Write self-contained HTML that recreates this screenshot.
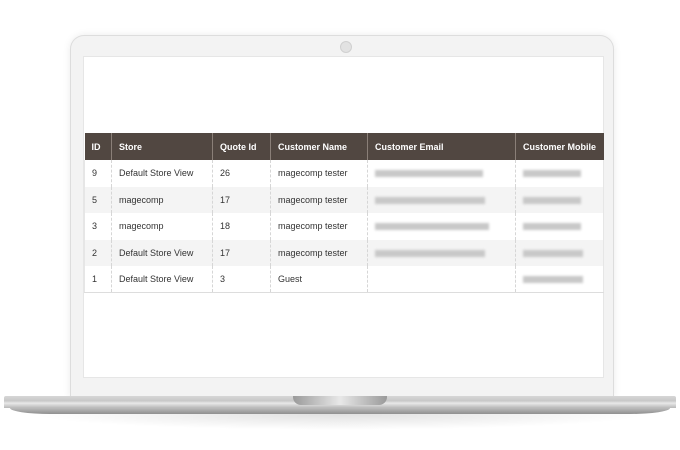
<!DOCTYPE html>
<html><head><style>
*{margin:0;padding:0;box-sizing:border-box}
body{width:680px;height:450px;background:#fff;position:relative;overflow:hidden;font-family:"Liberation Sans",sans-serif}
.lid{position:absolute;left:70px;top:35px;width:544px;height:364px;background:#f3f3f3;border-radius:14px 14px 0 0;border:1px solid #ddd;border-bottom:none;box-shadow:0 0 8px rgba(0,0,0,.08)}
.cam{position:absolute;left:340px;top:41px;width:12px;height:12px;border-radius:50%;background:#e2e2e2;border:1px solid #d0d0d0}
.screen{position:absolute;left:83px;top:56px;width:521px;height:322px;background:#fff;border:1px solid #e6e6e6}
.base{position:absolute;left:4px;top:396px;width:672px;height:12px;background:linear-gradient(#d6d6d6,#c8c8c8 40%,#e8e8e8 60%,#b8b8b8);border-radius:2px 2px 0 0}
.base2{position:absolute;left:10px;top:408px;width:660px;height:6px;background:linear-gradient(#bbb,#8f8f8f);border-radius:0 0 40px 40px/0 0 6px 6px}
.shadow{position:absolute;left:30px;top:414px;width:620px;height:16px;background:radial-gradient(ellipse at top,rgba(0,0,0,.12),rgba(0,0,0,0) 70%)}
.notch{position:absolute;left:293px;top:396px;width:94px;height:9px;background:linear-gradient(90deg,#9a9a9a,#e8e8e8 50%,#9a9a9a);border-radius:0 0 8px 8px}
table{position:absolute;left:84px;top:133px;width:520px;border-collapse:collapse;font-size:9px;color:#333}
th{background:#514741;color:#fff;font-weight:bold;text-align:left;height:27px;padding:0 7px;border-left:1px solid #8a7f78}
th:first-child{border-left:none}
td{height:26.5px;padding:0 7px;border-left:1px dashed #d6d6d6}
td:first-child{border-left:1px solid #e6e6e6}
td:last-child{border-right:1px solid #e6e6e6}
tr:nth-child(odd) td{background:#f4f4f4}
tr:last-child td{border-bottom:1px solid #ddd}
.bl{display:inline-block;height:7px;background:#c8c8c8;filter:blur(1.3px);vertical-align:middle}
</style></head><body>
<div class="lid"></div>
<div class="cam"></div>
<div class="screen"></div>
<table>
<tr><th style="width:27px">ID</th><th style="width:101px">Store</th><th style="width:58px">Quote Id</th><th style="width:97px">Customer Name</th><th style="width:148px">Customer Email</th><th>Customer Mobile</th></tr>
<tr><td>9</td><td>Default Store View</td><td>26</td><td>magecomp tester</td><td><span class="bl" style="width:108px"></span></td><td><span class="bl" style="width:58px"></span></td></tr>
<tr><td>5</td><td>magecomp</td><td>17</td><td>magecomp tester</td><td><span class="bl" style="width:110px"></span></td><td><span class="bl" style="width:58px"></span></td></tr>
<tr><td>3</td><td>magecomp</td><td>18</td><td>magecomp tester</td><td><span class="bl" style="width:114px"></span></td><td><span class="bl" style="width:58px"></span></td></tr>
<tr><td>2</td><td>Default Store View</td><td>17</td><td>magecomp tester</td><td><span class="bl" style="width:110px"></span></td><td><span class="bl" style="width:60px"></span></td></tr>
<tr><td>1</td><td>Default Store View</td><td>3</td><td>Guest</td><td></td><td><span class="bl" style="width:60px"></span></td></tr>
</table>
<div class="shadow"></div>
<div class="base"></div>
<div class="base2"></div>
<div class="notch"></div>
</body></html>
